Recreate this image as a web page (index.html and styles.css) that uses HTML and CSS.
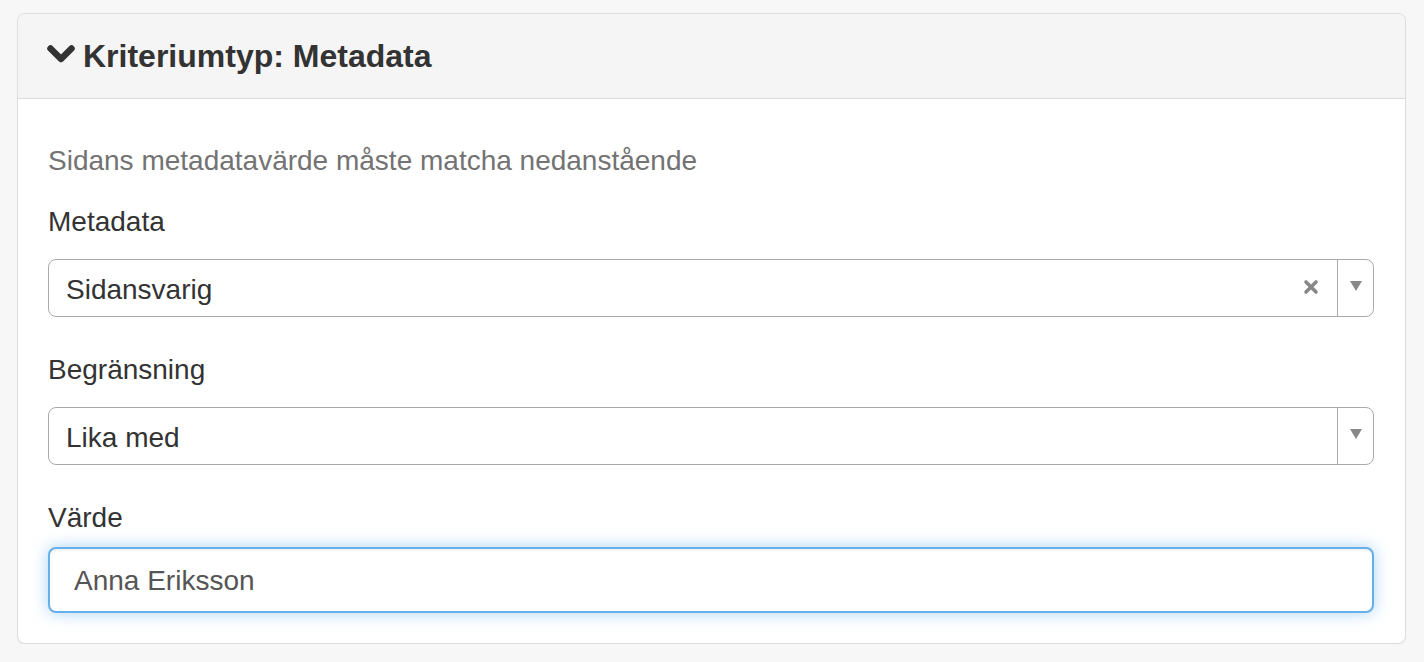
FILE: index.html
```html
<!DOCTYPE html>
<html lang="sv">
<head>
<meta charset="utf-8">
<title>Kriteriumtyp: Metadata</title>
<link rel="stylesheet" href="styles.css">
</head>
<body>
<div class="panel">
  <div class="panel-heading">
    <h3 class="panel-title">
      <svg class="chevron" width="28" height="19" viewBox="0 0 28 19" aria-hidden="true"><polyline points="3.5,3.5 14,14 24.5,3.5" fill="none" stroke="#333" stroke-width="6.5" stroke-linecap="round" stroke-linejoin="round"/></svg>
      <span>Kriteriumtyp: Metadata</span>
    </h3>
  </div>
  <div class="panel-body">
    <p class="help-block">Sidans metadatavärde måste matcha nedanstående</p>
    <div class="form-group">
      <label class="control-label">Metadata</label>
      <div class="chosen">
        <span class="chosen-value">Sidansvarig</span>
        <span class="chosen-clear">
          <svg width="16" height="16" viewBox="0 0 16 16" aria-hidden="true"><path d="M3 3 L13 13 M13 3 L3 13" stroke="#888" stroke-width="3.6" stroke-linecap="round"/></svg>
        </span>
        <span class="chosen-arrow">
          <svg width="12" height="10" viewBox="0 0 12 10" aria-hidden="true"><polygon points="0,0 12,0 6,10" fill="#888"/></svg>
        </span>
      </div>
    </div>
    <div class="form-group">
      <label class="control-label">Begränsning</label>
      <div class="chosen">
        <span class="chosen-value">Lika med</span>
        <span class="chosen-arrow">
          <svg width="12" height="10" viewBox="0 0 12 10" aria-hidden="true"><polygon points="0,0 12,0 6,10" fill="#888"/></svg>
        </span>
      </div>
    </div>
    <div class="form-group last">
      <label class="control-label tight">Värde</label>
      <input class="form-control" type="text" value="Anna Eriksson">
    </div>
  </div>
</div>
</body>
</html>
```

FILE: styles.css
```css
* { box-sizing: border-box; }

html, body {
  background: #f7f7f7;
}

body {
  margin: 13px 18px 18px 17px;
  font-family: "Liberation Sans", Arial, "Helvetica Neue", sans-serif;
  font-size: 28px;
  line-height: 40px;
  color: #333;
}

.panel {
  background: #fff;
  border: 1px solid #dcdcdc;
  border-radius: 8px;
  box-shadow: 0 1px 2px rgba(0,0,0,0.05);
}

.panel-heading {
  background: #f5f5f5;
  border-bottom: 1px solid #dcdcdc;
  border-radius: 7px 7px 0 0;
  padding: 24px 30px 24px 29px;
}

.panel-title {
  margin: 0;
  font-size: 32px;
  line-height: 36px;
  font-weight: bold;
  color: #333;
  display: flex;
  align-items: center;
  gap: 8px;
}

.chevron {
  display: block;
  margin-top: -3px;
}

.panel-body {
  padding: 30px 30px 30px 30px;
}

.help-block {
  margin: 12px 0 18px;
  color: #737373;
}

.form-group {
  margin-bottom: 30px;
}

.form-group.last {
  margin-bottom: 0;
}

.control-label {
  display: block;
  padding-top: 3px;
  margin-bottom: 17px;
  font-weight: normal;
  color: #333;
}

.control-label.tight {
  margin-bottom: 9px;
}

.chosen {
  display: flex;
  align-items: stretch;
  height: 58px;
  width: calc(100% - 1px);
  border: 1px solid #aaa;
  border-radius: 8px;
  background: #fff;
}

.chosen-value {
  flex: 1;
  display: flex;
  align-items: center;
  padding-left: 17px;
  padding-top: 4px;
  color: #333;
}

.chosen-clear {
  display: flex;
  align-items: center;
  padding: 0 18px 0 10px;
  margin-top: -2px;
}

.chosen-clear svg { display: block; }

.chosen-arrow {
  width: 36px;
  border-left: 1px solid #aaa;
  display: flex;
  align-items: center;
  justify-content: center;
}

.chosen-arrow svg {
  display: block;
  margin-top: -4px;
}

.form-control {
  display: block;
  width: calc(100% - 1px);
  height: 66px;
  padding: 2px 24px 0;
  font-family: inherit;
  font-size: 28px;
  color: #555;
  background: #fff;
  border: 2px solid #66afe9;
  border-radius: 8px;
  outline: none;
  box-shadow: inset 0 2px 2px rgba(0,0,0,0.05), 0 0 16px rgba(102,175,233,0.55);
}
```
